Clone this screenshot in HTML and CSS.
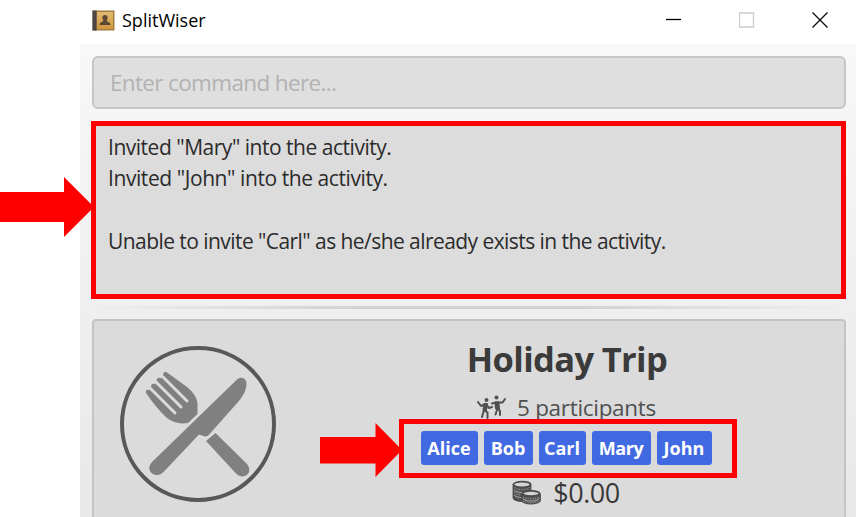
FILE: index.html
```html
<!DOCTYPE html>
<html lang="en">
<head>
<meta charset="utf-8">
<title>SplitWiser</title>
<link rel="stylesheet" href="styles.css">
</head>
<body>
<main class="window">
  <header class="titlebar">
    <svg class="app-icon" width="23" height="21" viewBox="0 0 23 21">
      <defs><linearGradient id="cover" x2="0" y2="1"><stop stop-color="#e4bb72"/><stop offset="1" stop-color="#cf973c"/></linearGradient></defs>
      <rect x=".5" y=".5" width="22" height="20" fill="#a37c40"/>
      <rect x=".5" y=".5" width="4" height="20" fill="#4d4446"/>
      <rect x="5" y="2" width="16" height="17" fill="url(#cover)"/>
      <path d="M13 5c2 0 3 1.300 2.600 3.300-.2 1.100-.8 1.700-1 2.500.3 1.200 3.600 1 3.900 4.200h-11c.3-3.200 3.600-3 3.900-4.200-.2-.8-.8-1.400-1-2.500C10 6.300 11 5 13 5z" fill="#5c4a37"/>
    </svg>
    <h1 class="app-name">SplitWiser</h1>
    <div class="controls">
      <svg width="16" height="16" viewBox="0 0 16 16"><path d="M0 7.500h15" stroke="#000" stroke-width="1.300"/></svg>
      <svg width="16" height="16" viewBox="0 0 16 16"><path d="M.5 1h14v14H.5z" fill="none" stroke="#ccc" stroke-width="1.300"/></svg>
      <svg width="16" height="16" viewBox="0 0 16 16"><path d="M.5.5l15 15M15.500.5l-15 15" stroke="#111" stroke-width="1.400"/></svg>
    </div>
  </header>
  <div class="content">
    <div class="command"><span class="placeholder">Enter command here...</span></div>
    <section class="result">
      <p class="line l1">Invited "Mary" into the activity.</p>
      <p class="line l2">Invited "John" into the activity.</p>
      <p class="line l3">Unable to invite "Carl" as he/she already exists in the activity.</p>
    </section>
    <div class="divider"></div>
    <section class="card">
      <svg class="meal" width="158" height="158" viewBox="0 0 158 158">
        <circle cx="79" cy="79" r="76" fill="none" stroke="#585858" stroke-width="4"/>
        <g fill="#808080">
          <path d="M27 45.500q1-1.500 3 0l2.500-5.500q1-2 3.500-.5l2-5.500q1.500-2 4-.5l3-6q1-1.500 3 0L68 42q10 8 10.500 17v10L69 78q-12 2-21-5Q38 64 27 48z"/>
          <path d="M118 34.500c4-3.500 9-1.500 9.500 3.500 0 7-3 12.500-8 18.500L91.500 88q-3 4-5.500 3.500l-6-2-35 37c-8 9-20-1-12-9.500z"/>
          <path d="M96.500 88l31 30.500c8 9-3 17.500-10.500 10L87 96z"/>
        </g>
        <path d="M30 42l26 26M36 36l26 26M42 30l26 26" stroke="#dbdbdb" stroke-width="3" stroke-linecap="round"/>
      </svg>
      <div class="details">
        <h2 class="title">Holiday Trip</h2>
        <div class="people">
          <svg width="31" height="24" viewBox="0 0 31 24" fill="#505050" stroke="#505050" stroke-width="2" stroke-linecap="round" stroke-linejoin="round">
            <circle cx="10.500" cy="5" r="1"/><circle cx="20.500" cy="2.500" r="1"/>
            <path d="M9.500 9L8 15l-2 7M8 15l3.500 2.500V23M9.500 9L5 11 2 7M10 9l3 4 3-1" fill="none"/>
            <path d="M20.500 7.500l1 6-2 6M21.500 13l2.500 3v4M20 7.500l-4 1M21 7.500h5.500L29 4" fill="none"/>
            <path d="M8.500 9h2.500l-1 6H7.500zM19.500 7.500h3l.5 6h-3z"/>
          </svg>
          <span class="count">5 participants</span>
        </div>
        <div class="tags">
          <span class="tag alice">Alice</span><span class="tag bob">Bob</span><span class="tag carl">Carl</span><span class="tag mary">Mary</span><span class="tag john">John</span>
        </div>
        <div class="money">
          <svg width="29" height="25" viewBox="0 0 29 25" stroke="#4c4c4c" stroke-width="1.800">
            <path d="M1.500 4v14c2 4 15 4 17 0V4" fill="#555"/>
            <path d="M2 10c3 3.500 13 3.500 16 0M2 15c3 3.500 13 3.500 16 0" stroke="#aaa" stroke-width="1" fill="none"/>
            <path d="M2.500 7.500c4 3 11 3 15 0M2.500 12.500c4 3 11 3 15 0" stroke="#999" stroke-dasharray="1 1.500" stroke-width="1.200" fill="none"/>
            <ellipse cx="10" cy="4.500" rx="8.500" ry="2.800" fill="#d4d4d4"/>
            <path d="M10 13.500v7c2 4 16 4 18 0v-7" fill="#555"/>
            <path d="M10.500 18.500c3 3.500 14 3.500 17 0" stroke="#aaa" stroke-width="1" fill="none"/>
            <path d="M11 17c4 2.500 12 2.500 16 0M11 21c4 2.500 12 2.500 16 0" stroke="#999" stroke-dasharray="1 1.500" stroke-width="1.200" fill="none"/>
            <ellipse cx="19" cy="13.500" rx="8.500" ry="2.600" fill="#d4d4d4"/>
          </svg>
          <span class="amount">$0.00</span>
        </div>
      </div>
    </section>
  </div>
</main>
<svg class="arrow arrow-result" width="95" height="62" viewBox="0 0 95 62"><path d="M0 16h64V1l30 30-30 30V46H0z" fill="#f00"/></svg>
<svg class="arrow arrow-tags" width="82" height="56" viewBox="0 0 82 56"><path d="M0 15h55.500V1L82 28 55.500 55V41.500H0z" fill="#f00"/></svg>
<div class="highlight"></div>
</body>
</html>
```

FILE: styles.css
```css
* { box-sizing: border-box; }
body {
  margin: 0;
  width: 856px;
  height: 517px;
  overflow: hidden;
  position: relative;
  background: #fff;
  font-family: "Open Sans", "Noto Sans", sans-serif;
}
h1, h2, p { margin: 0; font-weight: 400; white-space: nowrap; }
svg { display: block; flex: none; }
.window { margin-left: 80px; height: 517px; display: flex; flex-direction: column; }
.titlebar { height: 44px; flex: none; display: flex; align-items: center; padding: 0 28px 4px 12px; }
.app-name { margin-left: 7px; font-size: 18px; line-height: 24px; letter-spacing: 0; }
.controls { margin-left: auto; display: flex; gap: 57px; }
.content {
  flex: 1;
  min-height: 0;
  overflow: hidden;
  padding: 12px 10px 0 12px;
  background: linear-gradient(#f8f8f8, #e8e8e8);
}
.command {
  height: 53px;
  border: 2px solid #c6c6c6;
  border-radius: 6px;
  background: #dfdfdf;
  padding-left: 16px;
  display: flex;
  align-items: center;
}
.placeholder { color: #b2b2b2; font-size: 22.500px; line-height: 32px; letter-spacing: -0.65px; white-space: nowrap; }
.result {
  height: 178px;
  margin: 12px 0 0 -1px;
  border: 5px solid #f00;
  background: #dcdcdc;
  padding: 6px 0 0 12px;
  color: #2b2b2b;
}
.line { font-size: 21px; line-height: 31px; }
.l1 { letter-spacing: -0.48px; }
.l2 { letter-spacing: -0.42px; }
.l3 { margin-top: 32px; letter-spacing: -0.56px; }
.divider {
  height: 3px;
  margin: 7px 0 10px;
  background: linear-gradient(90deg, transparent, #d2d2d2 35%, #d2d2d2 65%, transparent);
}
.card {
  height: 240px;
  border: 2px solid #c4c4c4;
  border-radius: 4px;
  background: #dbdbdb;
  display: flex;
  padding: 24px 0 0 25px;
}
.details {
  width: 300px;
  margin: -8px 0 0 139px;
  display: flex;
  flex-direction: column;
  align-items: center;
  color: #383838;
  white-space: nowrap;
}
.title { font-weight: 700; font-size: 34.500px; line-height: 44px; letter-spacing: -0.65px; margin-left: 2px; color: #3b3b3b; }
.people { display: flex; align-items: center; height: 36px; margin-top: 8px; color: #505050; }
.count { margin-left: 10px; font-size: 22.500px; letter-spacing: -0.3px; }
.tags { display: flex; gap: 6px; margin-top: 6px; }
.tag {
  height: 34px;
  border-radius: 3px;
  background: #4169e1;
  color: #fff;
  font-size: 18px;
  font-weight: 700;
  line-height: 34px;
  text-align: center;
}
.alice { width: 57px; }
.bob { width: 49px; }
.carl { width: 47px; }
.mary { width: 59px; letter-spacing: -0.4px; }
.john { width: 55px; }
.money { display: flex; align-items: center; height: 40px; margin-top: 7px; }
.amount { margin-left: 12px; font-size: 27px; letter-spacing: -0.5px; }
.arrow { position: absolute; }
.arrow-result { left: 0; top: 176px; }
.arrow-tags { left: 320px; top: 422px; }
.highlight { position: absolute; left: 399px; top: 419px; width: 338px; height: 59px; border: 5px solid #f00; }
```
